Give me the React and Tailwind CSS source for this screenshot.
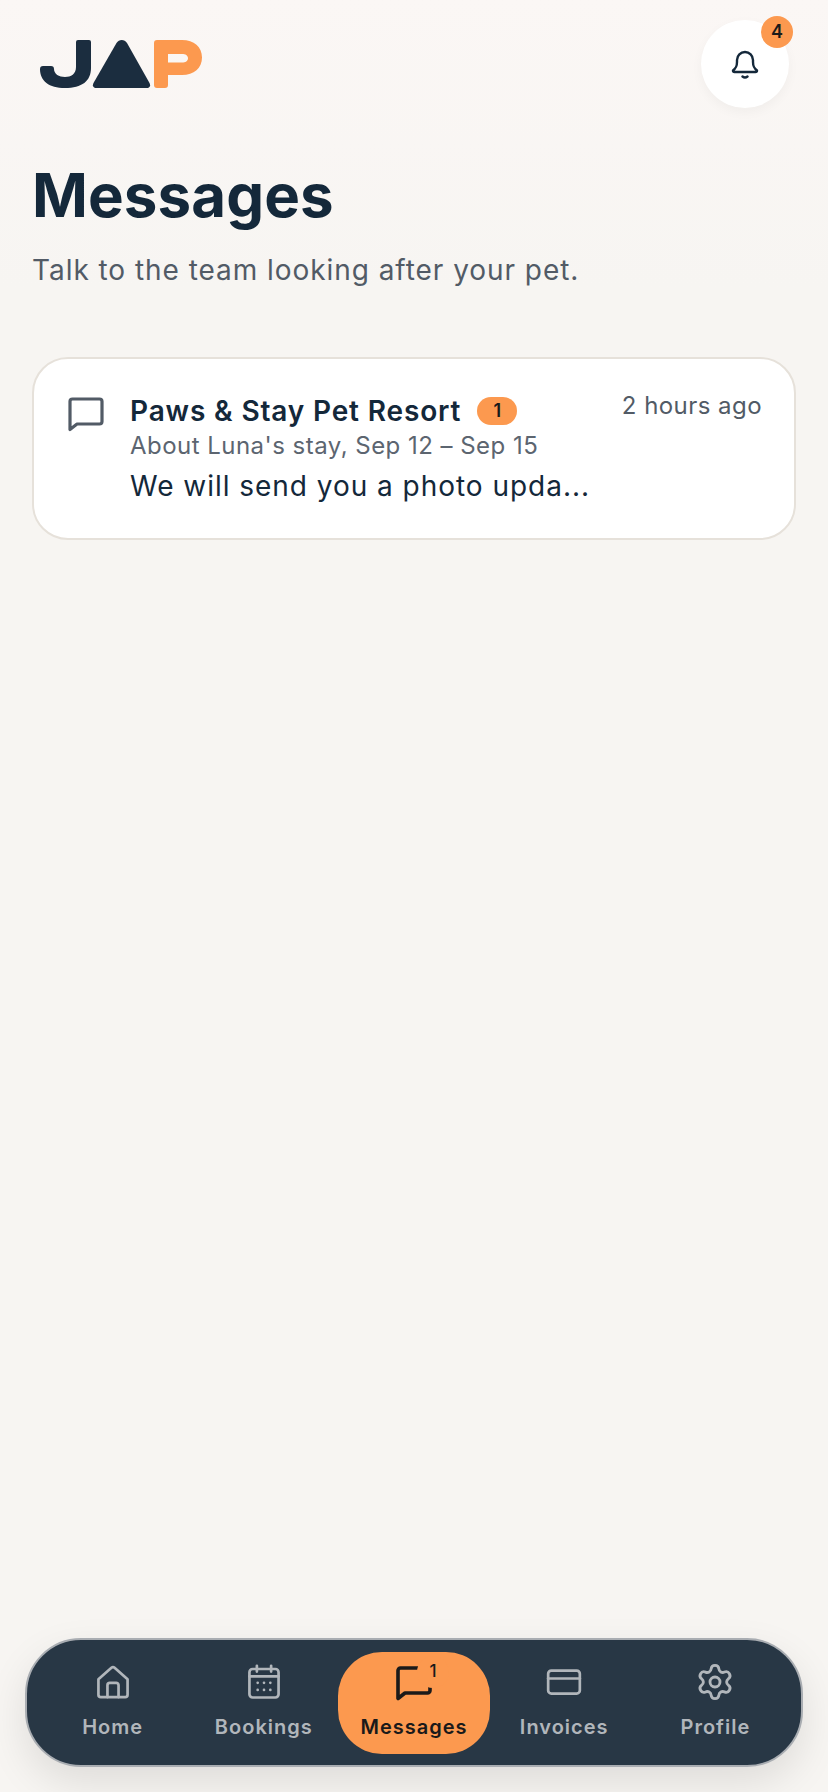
import { Settings } from "lucide-react";

const NavIcon = ({ children }) => (
  <svg width="38" height="38" viewBox="0 0 24 24" fill="none" stroke="currentColor" strokeWidth="1.7" strokeLinecap="round" strokeLinejoin="round">
    {children}
  </svg>
);

const Logo = () => (
  <svg width="162" height="48" viewBox="0 0 162 48" className="block">
    <path d="M38 0h11a2 2 0 0 1 2 2v26c0 13-9 20-26 20C9 48 0 41 0 29a3 3 0 0 1 3-3h8a3 3 0 0 1 3 3c0 5 5 8 11 8s11-3 11-10V2a2 2 0 0 1 2-2z" fill="#1b2d3f" />
    <path d="M76.500 3c2.500-4 8-4 10.500 0L109.500 43c1.500 3 0 5-3 5H56.500c-3 0-4.500-2-3-5z" fill="#1b2d3f" />
    <path d="M114 3a3 3 0 0 1 3-3h25c12 0 20 7 20 17.500S154 35 142 35h-14v10a3 3 0 0 1-3 3h-8a3 3 0 0 1-3-3zM128 14v8.500h14c3.500 0 6-1.500 6-4.250S145.500 14 142 14z" fill="#fc994f" fillRule="evenodd" />
  </svg>
);

const BellIcon = () => (
  <svg width="30" height="32" viewBox="0 0 30 32" fill="none" stroke="#14283a" strokeWidth="2.400" strokeLinecap="round" strokeLinejoin="round">
    <path d="M3 22.500c2.500-2 4-3.500 4-8.500V12a8 8 0 0 1 16 0v2c0 5 1.500 6.500 4 8.500 0 1-.5 1.500-1.500 1.500h-21C3.500 24 3 23.500 3 22.500z" />
    <path d="M12.500 28.500c1.500 1.200 3.500 1.200 5 0" />
  </svg>
);

const ChatIcon = ({ className, strokeWidth = 3.2 }) => (
  <svg width="36" height="35" viewBox="0 0 36 35" fill="none" stroke="currentColor" strokeWidth={strokeWidth} strokeLinecap="round" strokeLinejoin="round" className={className}>
    <path d="M2 32.500V4.500a2.500 2.500 0 0 1 2.500-2.500h27A2.500 2.500 0 0 1 34 4.500v20a2.500 2.500 0 0 1-2.500 2.500H9z" />
  </svg>
);

const tabs = [
  {
    label: "Home",
    icon: (
      <NavIcon>
        <path d="M2.800 10.200 11 3a1.500 1.500 0 0 1 2 0l8.200 7.200V20a1.500 1.500 0 0 1-1.500 1.500H4.300A1.500 1.500 0 0 1 2.800 20z" />
        <path d="M8.500 21.500V14a1.500 1.500 0 0 1 1.500-1.500h4a1.500 1.500 0 0 1 1.500 1.500v7.500" />
      </NavIcon>
    ),
  },
  {
    label: "Bookings",
    icon: (
      <NavIcon>
        <rect x="2.800" y="3.800" width="18.400" height="18" rx="2" />
        <path d="M2.800 8.500h18.400M7.500 1.800v3.600M16.500 1.800v3.600" />
        <path d="M8 12.500h.01M12 12.500h.01M16 12.500h.01M8 17h.01M12 17h.01M16 17h.01" />
      </NavIcon>
    ),
  },
  {
    label: "Messages",
    active: true,
    icon: <ChatIcon strokeWidth={3.6} className="mt-[2px]" />,
  },
  {
    label: "Invoices",
    icon: (
      <NavIcon>
        <rect x="2" y="4.800" width="20" height="14.500" rx="2" />
        <path d="M2 9.800h20" />
      </NavIcon>
    ),
  },
  {
    label: "Profile",
    icon: <Settings size={40} strokeWidth={1.7} />,
  },
];

export default function App() {
  return (
    <div className="relative h-[1792px] overflow-hidden bg-[#f7f5f2] font-['Inter',sans-serif]">
      <div className="bg-gradient-to-b from-[#fbf7f5] to-[#f7f5f2] px-8 pt-5">
        <header className="flex items-start justify-between">
          <div className="pl-2 pt-5">
            <Logo />
          </div>
          <div className="relative mr-[7px] flex h-[88px] w-[88px] items-center justify-center rounded-full bg-white shadow-[0_4px_12px_rgba(0,0,0,0.04)]">
            <BellIcon />
            <span className="absolute right-[-4px] top-[-4px] flex h-8 w-8 items-center justify-center rounded-full bg-[#fc994f] text-lg font-semibold text-[#1a1a1a]">
              4
            </span>
          </div>
        </header>
        <h1 className="mt-[51px] text-[60px] font-bold leading-[72px] tracking-[0.1px] text-[#14283a]">Messages</h1>
        <p className="mt-[19px] text-[28px] leading-[40px] tracking-[0.95px] text-[#525b66]">Talk to the team looking after your pet.</p>
      </div>

      <section className="mx-8 mt-[67px] flex h-[183px] items-start rounded-[36px] border-2 border-[#e6e1da] bg-white pl-[34px] pr-[32px] pt-[34px]">
        <ChatIcon className="mt-[4px] shrink-0 text-[#525b66]" />
        <div className="ml-[26px] min-w-0 flex-1">
          <div className="flex items-center">
            <h2 className="text-[28px] font-semibold leading-[36px] tracking-[0.85px] text-[#14283a]">Paws &amp; Stay Pet Resort</h2>
            <span className="ml-4 flex h-[28px] w-10 items-center justify-center rounded-full bg-[#fc994f] text-lg font-semibold text-[#1a1a1a]">1</span>
          </div>
          <p className="mt-px text-[24px] leading-[32px] tracking-[0.47px] text-[#5c6570]">About Luna's stay, Sep 12 – Sep 15</p>
          <p className="mt-[4px] text-[28px] leading-[40px] tracking-[0.97px] text-[#14283a]">We will send you a photo upda...</p>
        </div>
        <span className="mt-[-3px] shrink-0 text-[24px] leading-[32px] tracking-[0.45px] text-[#525b66]">2 hours ago</span>
      </section>

      <nav className="absolute bottom-[25px] left-[25px] right-[25px] flex h-[129px] items-center rounded-[56px] border-2 border-[#a9adb2] bg-[#283745] px-[10px] shadow-[0_16px_40px_rgba(0,0,0,0.1)]">
        {tabs.map((tab) => (
          <div
            key={tab.label}
            className={`flex h-[102px] flex-1 flex-col items-center justify-center rounded-[44px] ${tab.active ? "-mx-px bg-[#fc994f] text-[#1a1a1a]" : "text-[#b1b6bb]"}`}
          >
            <div className="relative flex h-9 items-center justify-center">
              {tab.icon}
              {tab.active && (
                <span className="absolute left-[21px] top-[-8px] flex h-8 w-8 items-center justify-center rounded-full bg-[#fc994f] text-[17px] font-medium">
                  1
                </span>
              )}
            </div>
            <span className="mt-[13px] text-[20px] font-semibold leading-[28px] tracking-[1px]">{tab.label}</span>
          </div>
        ))}
      </nav>
    </div>
  );
}
